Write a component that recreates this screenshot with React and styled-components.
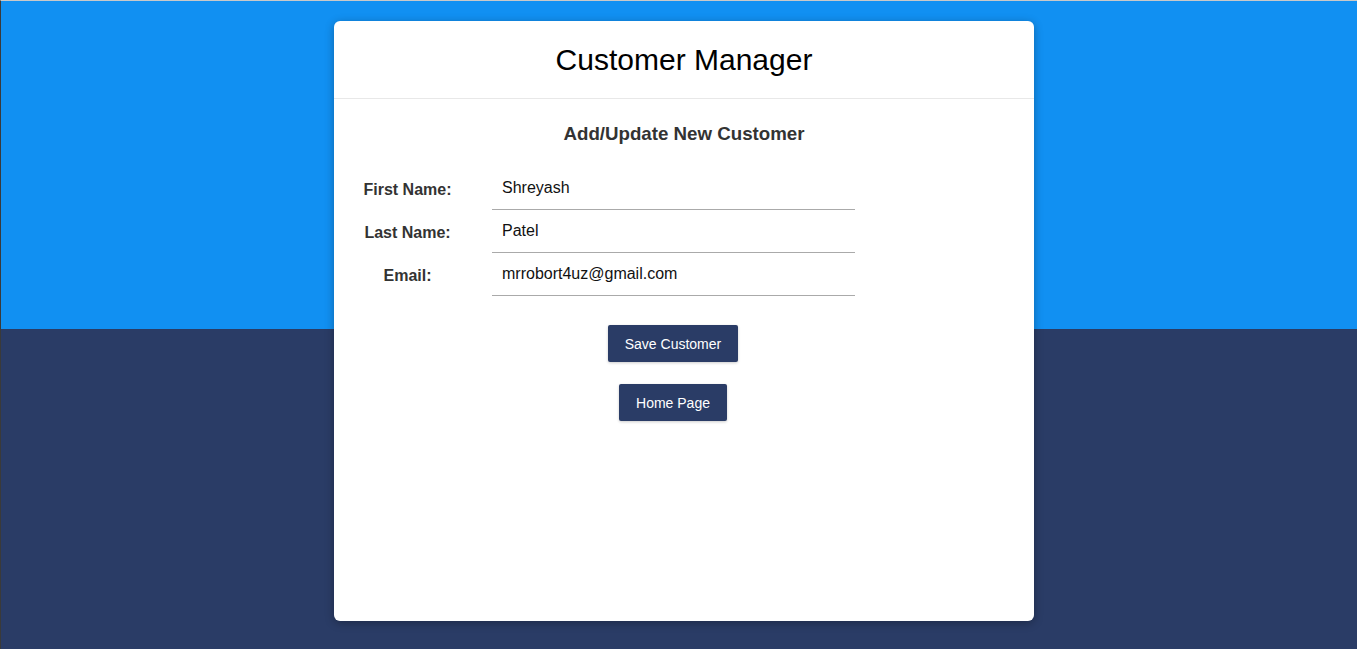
import React from "react";
import styled, { createGlobalStyle } from "styled-components";

const GlobalStyle = createGlobalStyle`
  html, body {
    margin: 0;
    padding: 0;
    height: 100%;
  }
  body {
    font-family: "Liberation Sans", Arial, sans-serif;
  }
  #root {
    min-height: 100%;
  }
`;

const Page = styled.div`
  box-sizing: border-box;
  min-height: 649px;
  border-top: 1px solid #c9c9c9;
  border-left: 1px solid #3a3a3a;
  background: linear-gradient(#1190f2 0, #1190f2 328px, #2a3c66 328px, #2a3c66 100%);
  display: flex;
  justify-content: center;
  align-items: flex-start;
  padding: 20px 0 0 10px;
`;

const Card = styled.main`
  box-sizing: border-box;
  width: 700px;
  height: 600px;
  background: #ffffff;
  border-radius: 6px;
  box-shadow: 0 2px 10px rgba(0, 0, 0, 0.3);
  display: flex;
  flex-direction: column;
`;

const Header = styled.header`
  height: 78px;
  box-sizing: border-box;
  border-bottom: 1px solid #e8e8e8;
  display: flex;
  align-items: center;
  justify-content: center;
`;

const Title = styled.h1`
  margin: 0;
  font-size: 30px;
  font-weight: 400;
  color: #000;
`;

const SubTitle = styled.h2`
  margin: 24px 0 0;
  font-size: 18.72px;
  line-height: 22px;
  font-weight: 700;
  color: #333;
  text-align: center;
`;

const Form = styled.form`
  margin-top: 22px;
  padding-left: 16px;
  display: grid;
  grid-template-columns: 115px 363px;
  column-gap: 27px;
  align-items: center;
`;

const Label = styled.label`
  font-size: 16px;
  font-weight: 700;
  color: #333;
  text-align: center;
  padding-top: 2px;
`;

const Input = styled.input`
  box-sizing: border-box;
  height: 43px;
  width: 100%;
  border: none;
  border-bottom: 1px solid #aaaaaa;
  padding: 0 0 0 10px;
  font-family: "Liberation Sans", Arial, sans-serif;
  font-size: 16px;
  color: #111;
  outline: none;
  background: transparent;
`;

const Actions = styled.div`
  margin-top: 29px;
  padding-right: 22px;
  display: flex;
  flex-direction: column;
  align-items: center;
  gap: 22px;
`;

const Button = styled.button`
  box-sizing: border-box;
  height: 37px;
  padding: 0 17px;
  border: none;
  border-radius: 2px;
  background: #2a3c66;
  color: #ffffff;
  font-family: "Liberation Sans", Arial, sans-serif;
  font-size: 14px;
  box-shadow: 0 1px 3px rgba(0, 0, 0, 0.2);
  cursor: pointer;
`;

const fields = [
  { id: "firstName", label: "First Name:", value: "Shreyash" },
  { id: "lastName", label: "Last Name:", value: "Patel" },
  { id: "email", label: "Email:", value: "mrrobort4uz@gmail.com" },
];

export default function App() {
  return (
    <>
      <GlobalStyle />
      <Page>
        <Card>
          <Header>
            <Title>Customer Manager</Title>
          </Header>
          <SubTitle>Add/Update New Customer</SubTitle>
          <Form onSubmit={(e) => e.preventDefault()}>
            {fields.map((f) => (
              <React.Fragment key={f.id}>
                <Label htmlFor={f.id}>{f.label}</Label>
                <Input id={f.id} defaultValue={f.value} />
              </React.Fragment>
            ))}
          </Form>
          <Actions>
            <Button type="button">Save Customer</Button>
            <Button type="button">Home Page</Button>
          </Actions>
        </Card>
      </Page>
    </>
  );
}
